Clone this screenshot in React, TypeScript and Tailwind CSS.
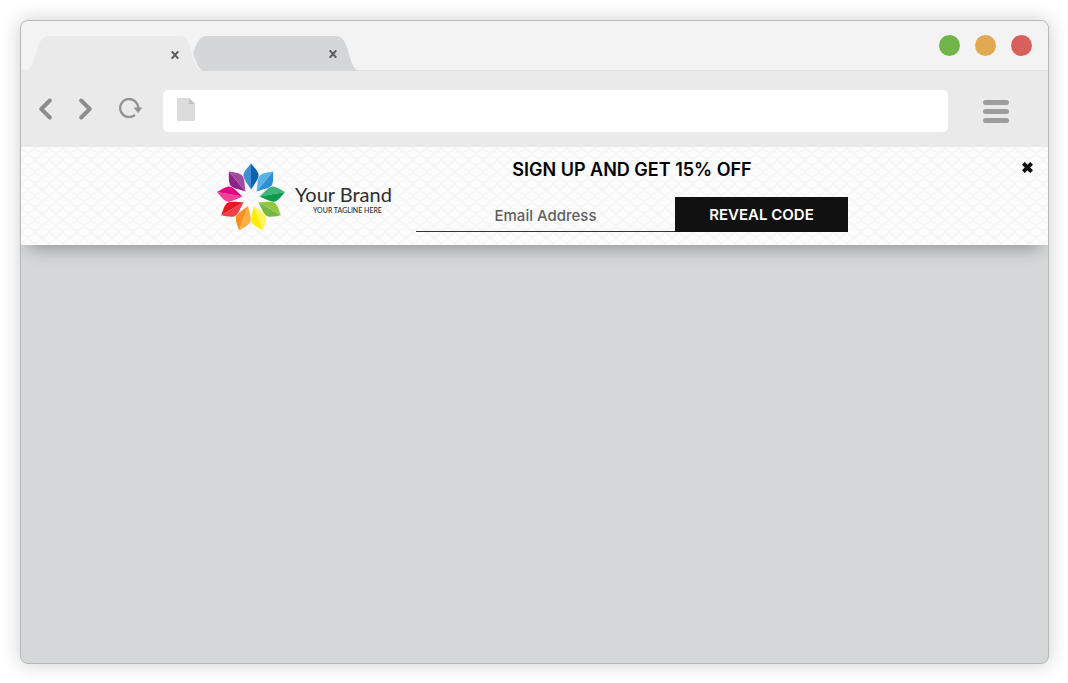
import React from 'react';

const petals: { angle: number; left: string; right: string }[] = [
  { angle: 0, left: '#3d8fd0', right: '#0b63ae' },
  { angle: 40, left: '#56b4e9', right: '#2f8fd6' },
  { angle: 80, left: '#3fb478', right: '#0c9a4c' },
  { angle: 120, left: '#93c83e', right: '#74b842' },
  { angle: 160, left: '#fff45c', right: '#ffec00' },
  { angle: 200, left: '#fbb040', right: '#f6921e' },
  { angle: 240, left: '#ef4048', right: '#e01b24' },
  { angle: 280, left: '#ee4199', right: '#e5057f' },
  { angle: 320, left: '#8a2487', right: '#a34a9e' },
];

function BrandMark() {
  return (
    <svg viewBox="-34 -36 70 70" className="size-[70px] shrink-0" aria-hidden="true">
      {petals.map((p) => (
        <g key={p.angle} transform={`rotate(${p.angle})`}>
          <path d="M0 -34.500 C-2.500 -31 -6 -28.500 -7.500 -24 C-8.500 -19.500 -3.500 -14.500 0 -8.500 Z" fill={p.left} />
          <path d="M0 -34.500 C2.500 -31 6 -28.500 7.500 -24 C8.500 -19.500 3.500 -14.500 0 -8.500 Z" fill={p.right} />
        </g>
      ))}
    </svg>
  );
}

function ScalePattern() {
  return (
    <svg className="absolute inset-0 size-full" aria-hidden="true">
      <defs>
        <pattern id="scales" width="14" height="12" patternUnits="userSpaceOnUse">
          <g fill="none" stroke="#f5f5f5" strokeWidth="1.5">
            <path d="M0 0 Q2 5 7 5.500 Q12 5 14 0" />
            <path d="M-7 6 Q-5 11 0 11.500 Q5 11 7 6 Q9 11 14 11.500 Q19 11 21 6" />
          </g>
        </pattern>
      </defs>
      <rect width="100%" height="100%" fill="url(#scales)" />
    </svg>
  );
}

function TabClose({ label }: { label: string }) {
  return (
    <button type="button" aria-label={label} className="relative flex size-3 items-center justify-center">
      <svg viewBox="0 0 8 8" className="size-2" fill="none" stroke="#5c5c5c" strokeWidth="2">
        <path d="M0.700 0.300 L7.300 7.700 M7.300 0.300 L0.700 7.700" />
      </svg>
    </button>
  );
}

function TabStrip() {
  return (
    <div className="flex h-[50px] items-end justify-between border-b border-[#e4e6e5] bg-[#f3f3f3] pr-4 pl-1">
      <div className="flex h-[35px] translate-y-px">
        <div className="relative z-10 flex w-[178px] items-center justify-end pt-[2px] pr-[22px]">
          <svg viewBox="0 0 178 35" preserveAspectRatio="none" className="absolute inset-0 size-full" aria-hidden="true">
            <path d="M0 35 C12 34 10 0 23 0 H155 C169 0 165 34 178 35 Z" fill="#eaeaea" />
          </svg>
          <TabClose label="Close first tab" />
        </div>
        <div className="relative -ml-3 flex w-[169px] items-center justify-end pr-[21px]">
          <svg viewBox="0 0 169 35" preserveAspectRatio="none" className="absolute inset-0 size-full" aria-hidden="true">
            <path d="M2 18 C5 8 8 0 16 0 H145 C160 0 156 34 169 35 H13 C8 35 6 27 2 18 Z" fill="#d5d6d8" />
          </svg>
          <TabClose label="Close second tab" />
        </div>
      </div>
      <div className="flex gap-[15px] self-center">
        <button type="button" aria-label="Minimize" className="size-[21px] rounded-full bg-[#70b44a]" />
        <button type="button" aria-label="Maximize" className="size-[21px] rounded-full bg-[#dfaa53]" />
        <button type="button" aria-label="Close window" className="size-[21px] rounded-full bg-[#d8605c]" />
      </div>
    </div>
  );
}

function Toolbar() {
  return (
    <div className="flex items-center bg-[#eaeaea] pt-[19px] pr-[39px] pb-[15px] pl-[18px]">
      <div className="flex items-center gap-[27px] pr-[21px] pb-1">
        <button type="button" aria-label="Back">
          <svg viewBox="0 0 13 22" className="h-[22px] w-[13px]" fill="none" stroke="#8d8d8d" strokeWidth="4" strokeLinecap="round" strokeLinejoin="round">
            <path d="M10.800 2.500 L2.300 11 L10.800 19.500" />
          </svg>
        </button>
        <button type="button" aria-label="Forward">
          <svg viewBox="0 0 13 22" className="h-[22px] w-[13px]" fill="none" stroke="#8d8d8d" strokeWidth="4" strokeLinecap="round" strokeLinejoin="round">
            <path d="M2.200 2.500 L10.700 11 L2.200 19.500" />
          </svg>
        </button>
        <button type="button" aria-label="Reload">
          <svg viewBox="0 0 23 22" className="h-[22px] w-[23px]" fill="none">
            <path d="M15.200 17.500 A9 9 0 1 1 19.200 10" stroke="#929292" strokeWidth="2.300" strokeLinecap="round" />
            <path d="M14.500 9.500 H23.500 L19 15 Z" fill="#929292" />
          </svg>
        </button>
      </div>
      <label className="flex h-[42px] flex-1 items-center rounded-[5px] bg-white pb-[3px] pl-[14px]">
        <svg viewBox="0 0 18 23" className="h-[23px] w-[18px] shrink-0" aria-hidden="true">
          <path d="M0 0 H12 L18 6 V23 H0 Z" fill="#dcdcdc" />
          <path d="M12 0 V6 H18 Z" fill="#c2c2c2" />
        </svg>
        <input type="text" aria-label="Address" className="h-full min-w-0 flex-1 bg-transparent px-3 text-sm outline-none" />
      </label>
      <button type="button" aria-label="Menu" className="ml-[35px] flex w-[26px] flex-col gap-1 pt-px">
        <span className="h-[5px] w-full rounded-full bg-[#9d9d9d]" />
        <span className="h-[5px] w-full rounded-full bg-[#9d9d9d]" />
        <span className="h-[5px] w-full rounded-full bg-[#9d9d9d]" />
      </button>
    </div>
  );
}

function SignUpBanner() {
  return (
    <section className="relative bg-[#fcfcfc] pt-[11px] pb-[13px] shadow-[0_12px_16px_-8px_rgba(0,0,0,0.3)]">
      <ScalePattern />
      <div className="relative flex items-center justify-center gap-[25px] pr-1">
        <div className="flex w-[174px] items-center gap-2 pt-[3px]">
          <BrandMark />
          <div className="flex flex-col items-center pt-1 font-['Lato',sans-serif] whitespace-nowrap text-[#2e2e2e]">
            <span className="text-[20px] leading-[22px]">Your Brand</span>
            <span className="pl-2 text-[7px] leading-[10px] font-medium">YOUR TAGLINE HERE</span>
          </div>
        </div>
        <form className="w-[432px]" onSubmit={(e) => e.preventDefault()}>
          <h1 className="text-center text-[18px] leading-6 font-semibold text-black">SIGN UP AND GET 15% OFF</h1>
          <div className="mt-[15px] flex h-[35px]">
            <input
              type="email"
              aria-label="Email Address"
              placeholder="Email Address"
              className="min-w-0 flex-1 border-b border-[#333] bg-transparent pt-[5px] text-center text-[15px] font-medium outline-none placeholder:text-[#5f5f5f]"
            />
            <button type="submit" className="w-[173px] bg-[#111] pt-px text-[15px] font-semibold text-white">
              REVEAL CODE
            </button>
          </div>
        </form>
      </div>
      <button type="button" aria-label="Close banner" className="absolute top-[15px] right-[15px]">
        <svg viewBox="0 0 10 10" className="size-[11px]" fill="none" stroke="#111" strokeWidth="3.600">
          <path d="M1.200 1.200 L8.800 8.800 M8.800 1.200 L1.200 8.800" />
        </svg>
      </button>
    </section>
  );
}

export default function App() {
  return (
    <div className="flex min-h-screen flex-col bg-white p-5 pr-[19px] pb-[19px] font-['Inter',sans-serif]">
      <div className="flex flex-1 flex-col overflow-hidden rounded-lg border border-[#b4b8b7] bg-[#d5d7d8] shadow-[0_0_20px_rgba(0,0,0,0.2)]">
        <TabStrip />
        <Toolbar />
        <SignUpBanner />
        <main className="flex-1" />
      </div>
    </div>
  );
}
